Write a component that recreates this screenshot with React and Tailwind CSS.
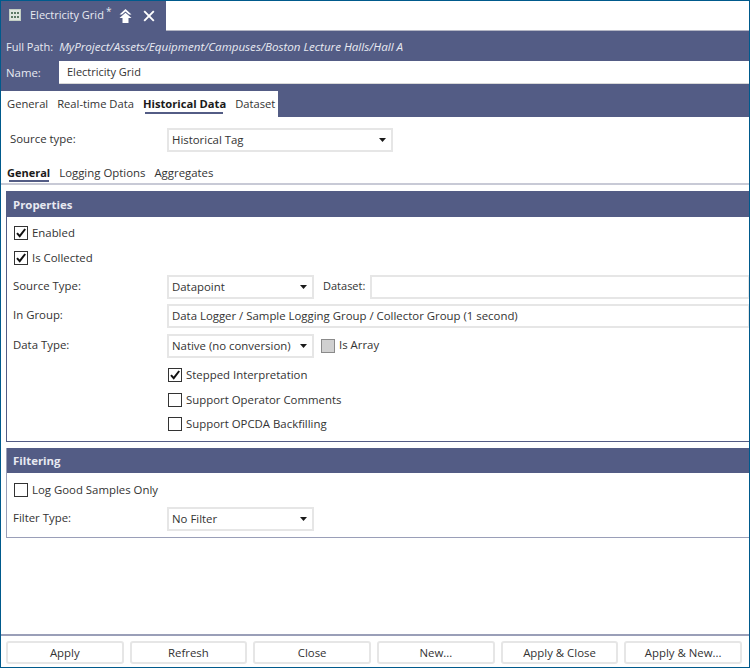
import React from "react";

const Caret = () => (
  <svg width="7" height="4" viewBox="0 0 7 4" className="shrink-0"><path d="M0 0h7L3.5 4z" fill="#1a1a1a" /></svg>
);

const Select = ({ label, className }) => (
  <div className={`h-6 flex items-center justify-between pl-[3px] pr-[5px] border-2 border-[#e6e6e6] bg-white ${className}`}>
    <span>{label}</span>
    <Caret />
  </div>
);

const Check = ({ checked, label, className = "" }) => (
  <div className={`flex items-center gap-[4px] h-[14px] ${className}`}>
    <div className="w-[14px] h-[14px] border border-[#333] bg-white flex items-center justify-center shrink-0">
      {checked && (
        <svg width="12" height="12" viewBox="0 0 12 12"><path d="M2 6.2l2.7 3L10.2 2" fill="none" stroke="#111" strokeWidth="2" /></svg>
      )}
    </div>
    <span>{label}</span>
  </div>
);

const Band = ({ title, className = "h-[25px]" }) => (
  <div className={`shrink-0 bg-[#535c85] text-[#e8eaf2] font-bold flex items-center pl-[6px] ${className}`}>{title}</div>
);

const Row = ({ label, children, className = "" }) => (
  <div className={`flex items-center h-6 ${className}`}>
    <div className="w-[160px] pl-[6px] shrink-0 relative -top-[1px]">{label}</div>
    {children}
  </div>
);

const Button = ({ label }) => (
  <div className="w-[117.5px] h-[23px] flex items-center justify-center border-2 border-[#e6e6e6] rounded-[3px] bg-white shrink-0">{label}</div>
);

export default function App() {
  return (
    <div className="w-[750px] h-[668px] border border-[#005a8c] bg-white flex flex-col overflow-hidden whitespace-nowrap text-[11.4px] text-[#333] font-['Open_Sans','Noto_Sans',sans-serif]">
      {/* Title tab */}
      <div className="h-[30px] shrink-0 flex">
        <div className="w-[165px] bg-[#535c85] flex items-center pl-[8px] text-[#e8eaf2]">
          <svg width="12" height="12" viewBox="0 0 12 12" className="shrink-0 mr-[9px] -mt-[2px]">
            <rect x="0.5" y="0.5" width="11" height="11" fill="#dfe6df" stroke="#c4cfc4" />
            <path d="M2 3h2v2H2zM5 3h2v2H5zM8 3h2v2H8zM2 7h2v2H2zM5 7h2v2H5zM8 7h2v2H8z" fill="#5d7a66" />
          </svg>
          <span className="relative -top-[1px] text-[11px]">Electricity Grid</span>
          <span className="relative -top-[5px] left-[2px] text-[10px]">*</span>
          <svg width="13" height="14" viewBox="0 0 13 14" className="ml-[10px]">
            <path d="M6.5 0L12.5 5.5H10L6.5 2.6 3 5.5H.5z" fill="#fff" />
            <path d="M6.5 3.8L12.5 9H9.5V14H3.5V9H.5z" fill="#fff" />
          </svg>
          <svg width="12" height="12" viewBox="0 0 12 12" className="ml-[11px]">
            <path d="M1.2 1.2l9.6 9.6M10.8 1.2l-9.6 9.6" stroke="#fff" strokeWidth="1.9" fill="none" />
          </svg>
        </div>
        <div className="flex-1 border-b border-[#b4b6c4]" />
      </div>

      {/* Header */}
      <div className="h-[86px] shrink-0 bg-[#535c85] flex flex-col text-[#e8eaf2]">
        <div className="h-[30px] flex items-center pl-[5px] pt-[2px]">
          <span className="mr-[6px] text-[11px]">Full Path:</span>
          <span className="italic text-[11.6px]">MyProject/Assets/Equipment/Campuses/Boston Lecture Halls/Hall A</span>
        </div>
        <div className="h-[23px] flex items-center pl-[5px]">
          <span className="w-[53px] shrink-0">Name:</span>
          <div className="flex-1 h-full bg-white text-[#333] flex items-center pl-[8px] border-b border-[#d8d8d8] text-[11px]">Electricity Grid</div>
        </div>
        <div className="mt-[7px] h-[26px] w-[277px] bg-white text-[#333] flex items-center gap-[9px] pl-[6px] relative text-[11.2px]">
          <span>General</span>
          <span>Real-time Data</span>
          <span className="font-bold text-[#1a1a1a] relative">
            Historical Data
            <span className="absolute left-[2px] right-[3px] -bottom-[2px] h-[2px] bg-[#535c85]" />
          </span>
          <span>Dataset</span>
        </div>
      </div>

      {/* Source type */}
      <div className="flex items-center h-6 mt-[11px] shrink-0">
        <div className="w-[166px] pl-[9px] shrink-0 relative -top-[1px]">Source type:</div>
        <Select label="Historical Tag" className="w-[226px]" />
      </div>

      {/* Sub tabs */}
      <div className="h-[33px] shrink-0 border-b-2 border-[#c8cad6] flex items-end pb-[2px] pl-[6px] gap-[9px]">
        <span className="font-bold text-[#1a1a1a] relative text-[11px]">
          General
          <span className="absolute left-[2px] right-[1px] -bottom-[1px] h-[2px] bg-[#535c85]" />
        </span>
        <span>Logging Options</span>
        <span>Aggregates</span>
      </div>

      {/* Properties */}
      <div className="ml-[5px] -mr-[2px] mt-[6px] shrink-0 border border-[#535c85] h-[251px] flex flex-col">
        <Band title="Properties" />
        <Check checked label="Enabled" className="ml-[7px] mt-[9px]" />
        <Check checked label="Is Collected" className="ml-[7px] mt-[11px]" />
        <Row label="Source Type:" className="mt-[10px]">
          <Select label="Datapoint" className="w-[147px]" />
          <span className="ml-[9px] w-[47px] relative -top-[1px] text-[11px]">Dataset:</span>
          <div className="flex-1 h-6 border-2 border-[#e6e6e6]" />
        </Row>
        <Row label="In Group:" className="mt-[5px]">
          <div className="flex-1 h-6 border-2 border-[#e6e6e6] flex items-center pl-[3px]">
            <span>Data Logger / Sample Logging Group / Collector Group (1 second)</span>
          </div>
        </Row>
        <Row label="Data Type:" className="mt-[6px]">
          <Select label="Native (no conversion)" className="w-[147px]" />
          <div className="ml-[7px] w-[14px] h-[14px] border border-[#8a8a8a] bg-[#d0d0d0] shrink-0" />
          <span className="ml-[4px] relative -top-[1px]">Is Array</span>
        </Row>
        <Check checked label="Stepped Interpretation" className="ml-[161px] mt-[10px]" />
        <Check label="Support Operator Comments" className="ml-[161px] mt-[11px]" />
        <Check label="Support OPCDA Backfilling" className="ml-[161px] mt-[10px]" />
      </div>

      {/* Filtering */}
      <div className="ml-[5px] -mr-[2px] mt-[6px] shrink-0 border border-[#9a9fb8] border-t-0 h-[90px] flex flex-col">
        <Band title="Filtering" />
        <Check label="Log Good Samples Only" className="ml-[7px] mt-[10px]" />
        <Row label="Filter Type:" className="mt-[10px]">
          <Select label="No Filter" className="w-[147px]" />
        </Row>
      </div>

      <div className="flex-1" />

      {/* Footer */}
      <div className="h-[33px] shrink-0 border-t-2 border-[#9a9fb8] flex items-start pt-[5px] pl-[5px] gap-[6.2px]">
        <Button label="Apply" />
        <Button label="Refresh" />
        <Button label="Close" />
        <Button label="New..." />
        <Button label="Apply & Close" />
        <Button label="Apply & New..." />
      </div>
    </div>
  );
}
